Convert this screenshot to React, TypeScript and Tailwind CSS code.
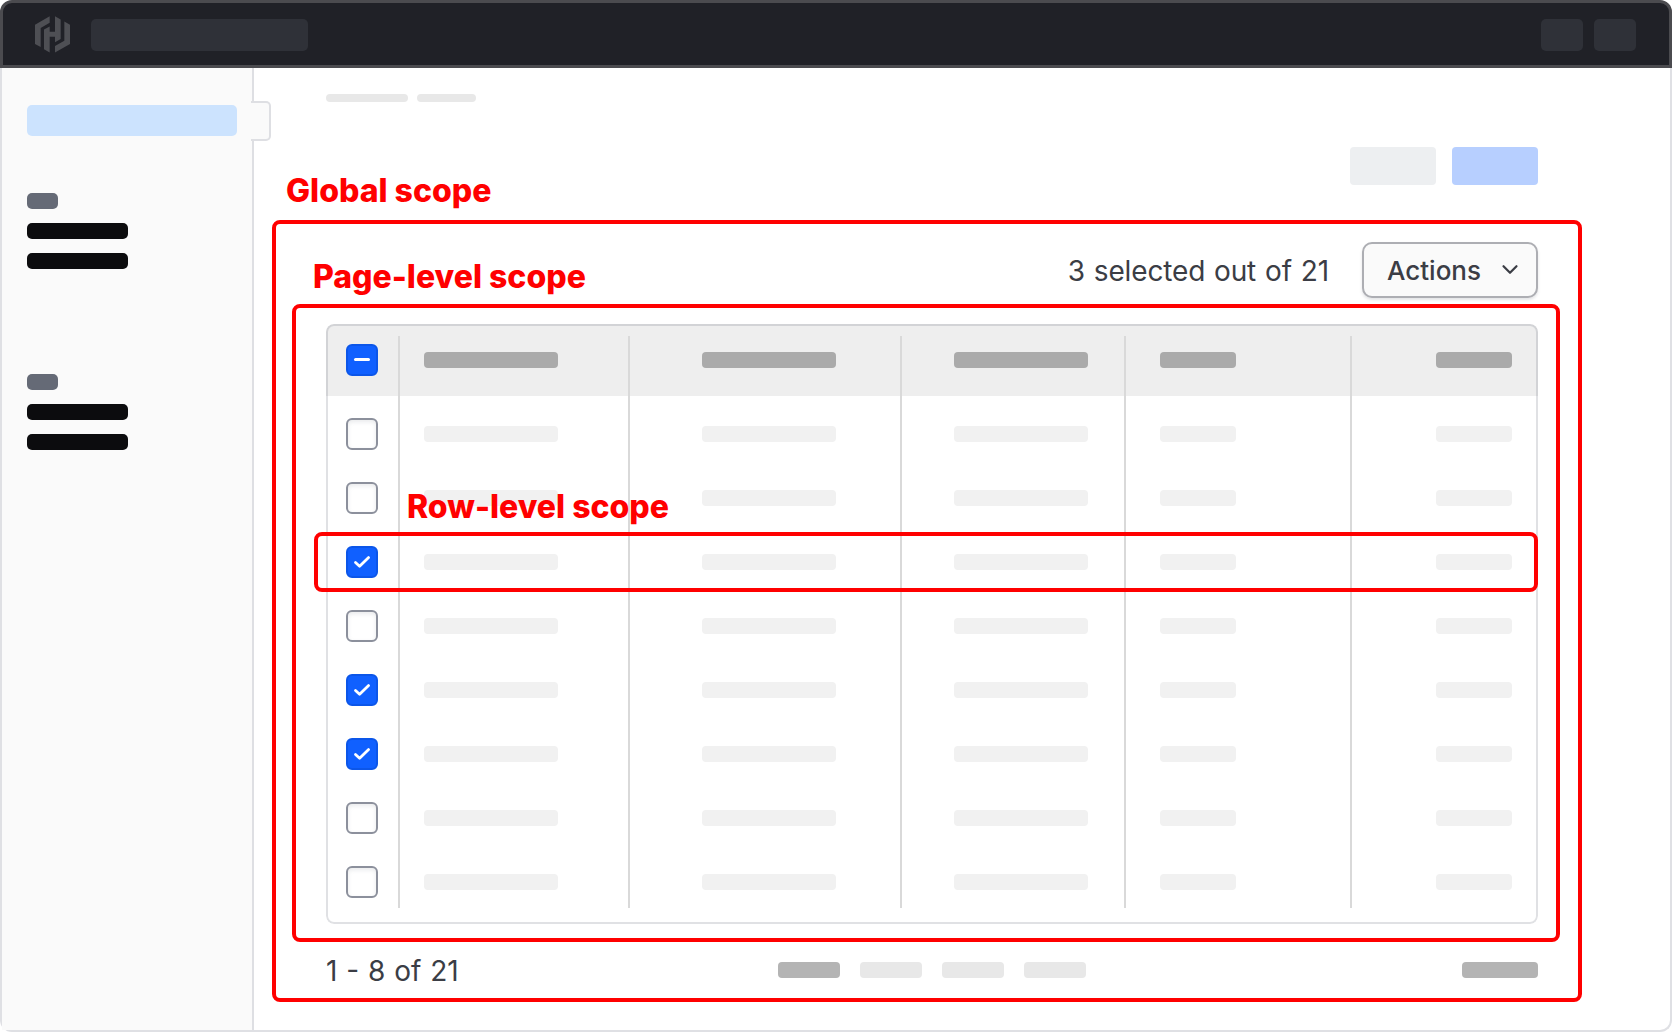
import React from "react";

type CheckState = "off" | "on" | "mixed";

const rows: CheckState[] = ["off", "off", "on", "off", "on", "on", "off", "off"];

const columns = "grid grid-cols-[72px_230px_272px_224px_226px_184px]";

function Logo() {
  return (
    <svg viewBox="105 49 105 109" className="-mt-px h-[36.5px] w-[35px] fill-[#4e4f54]" aria-hidden="true">
      <path d="M149 49.500 L105 75 V132.500 L122 142 V84.500 L149 69 Z" />
      <path d="M149 80 L132 89.500 V148.500 L149 158 V111 H165 V127.500 L182 118 V59 L165 49.500 V96 H149 Z" />
      <path d="M193 65.500 L210 75 V132.500 L165 158 V139 L193 123 Z" />
    </svg>
  );
}

function Checkbox({ state }: { state: CheckState }) {
  if (state === "off") {
    return (
      <span className="block size-8 rounded-md border-2 border-[#8c909c] bg-white shadow-[inset_0_2px_4px_rgba(101,106,118,0.14)]" />
    );
  }
  return (
    <span className="flex size-8 items-center justify-center rounded-md border-2 border-[#0c56e9] bg-[#1060ff]">
      <svg viewBox="0 0 24 24" className="size-6 shrink-0 fill-none stroke-white" strokeLinecap="round" strokeLinejoin="round">
        {state === "on" ? (
          <path d="M5.500 12.500 L9.600 16.300 L18.600 7.600" strokeWidth="2.800" />
        ) : (
          <path d="M5.500 11.500 H18.500" strokeWidth="3" />
        )}
      </svg>
    </span>
  );
}

function Row({ state, header = false }: { state: CheckState; header?: boolean }) {
  const tone = header ? "h-4 rounded bg-[#aaaaaa]" : "h-4 rounded bg-[#f1f1f1]";
  return (
    <div className={`${columns} items-center ${header ? "h-[72px]" : "h-16"}`}>
      <div className="pl-[18px]">
        <Checkbox state={state} />
      </div>
      <div className="pl-6">
        <div className={`${tone} w-[134px]`} />
      </div>
      <div className="pl-[72px]">
        <div className={`${tone} w-[134px]`} />
      </div>
      <div className="pl-[52px]">
        <div className={`${tone} w-[134px]`} />
      </div>
      <div className="pl-[34px]">
        <div className={`${tone} w-[76px]`} />
      </div>
      <div className="flex justify-end pr-6">
        <div className={`${tone} w-[76px]`} />
      </div>
    </div>
  );
}

function Table() {
  return (
    <div className="relative h-[600px] overflow-hidden rounded-lg">
      <div className="bg-[#eeeeee] px-0.5">
        <Row state="mixed" header />
      </div>
      <div className="px-0.5 pt-1.5">
        {rows.map((state, i) => (
          <Row key={i} state={state} />
        ))}
      </div>
      <div className={`${columns} pointer-events-none absolute inset-x-0.5 top-3 bottom-4`}>
        <div className="border-r-2 border-[#d9d9d9]" />
        <div className="border-r-2 border-[#d9d9d9]" />
        <div className="border-r-2 border-[#d9d9d9]" />
        <div className="border-r-2 border-[#d9d9d9]" />
        <div className="border-r-2 border-[#d9d9d9]" />
      </div>
      <div className="pointer-events-none absolute inset-0 rounded-lg border-2 border-[#656a76]/20" />
    </div>
  );
}

function NavGroup() {
  return (
    <div className="flex flex-col gap-3.5">
      <div className="h-4 w-[31px] rounded-[5px] bg-[#656a76]" />
      <div className="h-4 w-[101px] rounded-[5px] bg-[#0c0c0e]" />
      <div className="h-4 w-[101px] rounded-[5px] bg-[#0c0c0e]" />
    </div>
  );
}

function Sidebar() {
  return (
    <aside className="relative w-[252px] shrink-0 border-r-2 border-[#dedfe3] bg-[#fafafa] pt-[37px] pl-[25px]">
      <div className="h-[31px] w-[210px] rounded-[5px] bg-[#cce3fe]" />
      <div className="mt-[57px]">
        <NavGroup />
      </div>
      <div className="mt-[105px]">
        <NavGroup />
      </div>
      <div className="absolute top-[33px] -right-[19px] h-10 w-5 rounded-r-[5px] border-2 border-l-0 border-[#dedfe3] bg-[#fafafa]" />
    </aside>
  );
}

export default function App() {
  return (
    <div className="flex h-[1032px] w-[1672px] flex-col overflow-hidden bg-white font-['Inter',sans-serif] text-[#3b3d45]">
      <header className="flex h-[68px] shrink-0 items-center rounded-t-xl border-[3px] border-[#4b4b4f] bg-[#202127] pt-0.5 pr-[33px] pl-8">
        <Logo />
        <div className="ml-[21px] h-8 w-[217px] rounded-[5px] bg-[#2f3138]" />
        <div className="ml-auto flex gap-[11px]">
          <div className="h-8 w-[42px] rounded-[5px] bg-[#2f3138]" />
          <div className="h-8 w-[42px] rounded-[5px] bg-[#2f3138]" />
        </div>
      </header>
      <div className="flex flex-1 rounded-b-xl border-2 border-t-0 border-[#dfe0e4]">
        <Sidebar />
        <main className="flex-1 pl-[18px]">
          <div className="ml-[54px] flex gap-[9px] pt-[26px]">
            <div className="h-2 w-[82px] rounded bg-[#e8e8e8]" />
            <div className="h-2 w-[59px] rounded bg-[#e8e8e8]" />
          </div>
          <div className="mt-[45px] flex h-[73px] w-[1266px] justify-between">
            <div className="mt-6 ml-[14px] text-[32px] leading-[40px] font-extrabold whitespace-nowrap text-[#ff0000]">
              Global scope
            </div>
            <div className="flex gap-4">
              <div className="h-[38px] w-[86px] rounded bg-[#edeff1]" />
              <div className="h-[38px] w-[86px] rounded bg-[#b7cfff]" />
            </div>
          </div>
          <section className="h-[782px] w-[1310px] rounded-lg border-4 border-[#ff0000] px-4">
            <div className="flex h-20 pr-6 pl-[21px]">
              <div className="mt-[33px] text-[32px] leading-[40px] font-extrabold text-[#ff0000]">Page-level scope</div>
              <div className="mt-[29px] ml-auto text-[28px] leading-[36px] tracking-[-0.15px] whitespace-nowrap [word-spacing:1.2px]">
                3 selected out of 21
              </div>
              <button className="mt-[18px] ml-[33px] flex h-14 w-[176px] items-center justify-between rounded-[10px] border-2 border-[#adaeb3] bg-[#fafafa] pr-[17px] pl-[23px] text-[26px] font-medium shadow-[0_2px_3px_rgba(101,106,118,0.18)]">
                <span>Actions</span>
                <svg viewBox="0 0 18 12" className="h-3 w-[18px] fill-none stroke-[#3b3d45]" strokeWidth="2.200" strokeLinecap="round" strokeLinejoin="round">
                  <path d="M2.500 2.200 L9 8.800 L15.500 2.200" />
                </svg>
              </button>
            </div>
            <div className="relative h-[638px] w-[1268px] rounded-lg border-4 border-[#ff0000] pt-4 pr-[18px] pl-[30px]">
              <Table />
              <div className="absolute top-[179px] left-[111px] text-[32px] leading-[40px] font-extrabold whitespace-nowrap text-[#ff0000]">
                Row-level scope
              </div>
              <div className="absolute top-[224px] left-[18px] h-[60px] w-[1224px] rounded-lg border-4 border-[#ff0000]" />
            </div>
            <div className="flex h-14 items-center pr-6 pl-[34px]">
              <div className="w-[452px] pt-px text-[28px] leading-[36px] [word-spacing:1px]">1 - 8 of 21</div>
              <div className="flex gap-5">
                <div className="h-4 w-[62px] rounded bg-[#b4b4b4]" />
                <div className="h-4 w-[62px] rounded bg-[#e8e8e8]" />
                <div className="h-4 w-[62px] rounded bg-[#e8e8e8]" />
                <div className="h-4 w-[62px] rounded bg-[#e8e8e8]" />
              </div>
              <div className="ml-auto h-4 w-[76px] rounded bg-[#b4b4b4]" />
            </div>
          </section>
        </main>
      </div>
    </div>
  );
}
